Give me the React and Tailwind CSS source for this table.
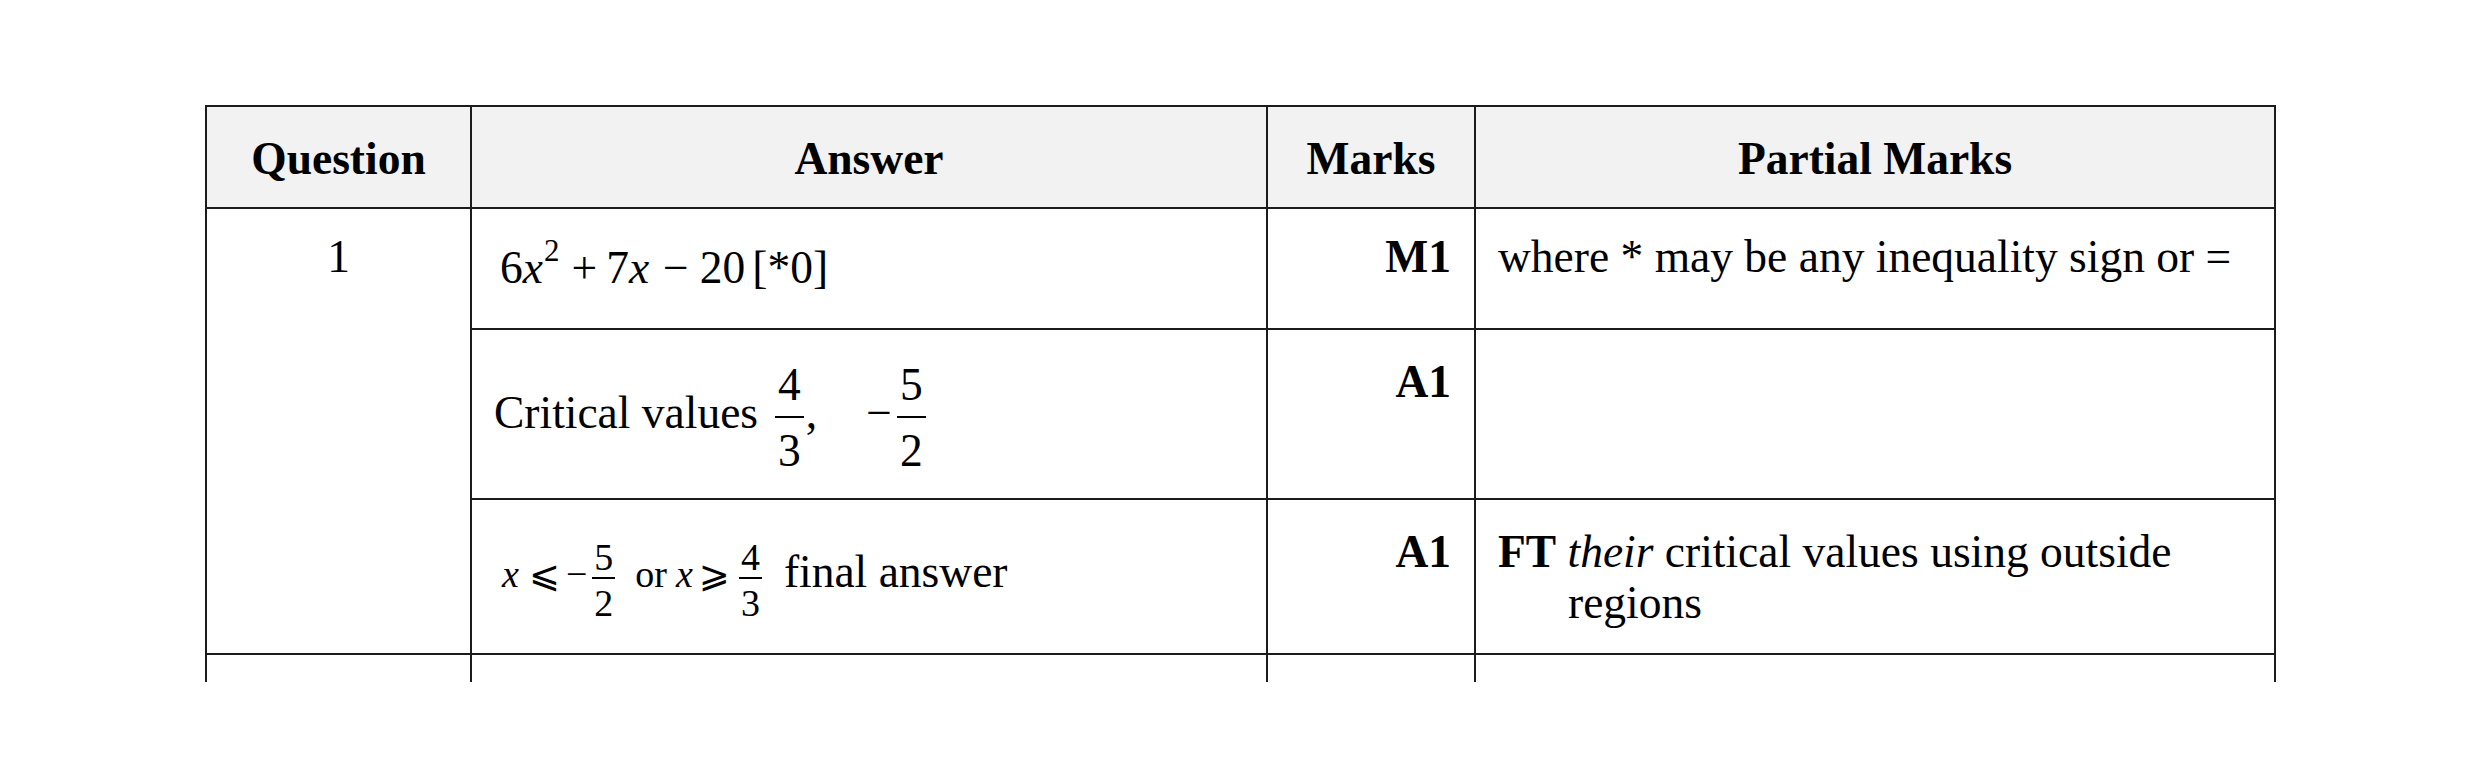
const B = "border-2 border-[#1c1c1c] align-top";
const LAST = "border-x-2 border-t-2 border-b-0 border-[#1c1c1c] align-top";

function FracBig({ n, d, cls }) {
  return (
    <span className={`inline-flex flex-col items-center align-[28px] ${cls}`}>
      <span className="px-[3px] pb-[15px] leading-[32px]">{n}</span>
      <span className="h-[2px] w-full bg-black"></span>
      <span className="px-[3px] pt-[17px] leading-[32px]">{d}</span>
    </span>
  );
}

function FracSmall({ n, d, cls }) {
  return (
    <span className={`inline-flex flex-col items-center align-[17px] text-[38px] ${cls}`}>
      <span className="px-[2px] pb-[6px] leading-[28px]">{n}</span>
      <span className="h-[2px] w-full bg-black"></span>
      <span className="px-[2px] pt-[10px] leading-[28px]">{d}</span>
    </span>
  );
}

export default function App() {
  return (
    <div className="min-h-[757px] w-full bg-white pl-[205px] pt-[105px] font-['Liberation_Serif','Times_New_Roman',serif] text-[45.5px] leading-[51px] text-black">
      <table className="w-[2071px] table-fixed border-collapse">
        <colgroup>
          <col className="w-[265px]" />
          <col className="w-[796px]" />
          <col className="w-[208px]" />
          <col className="w-[800px]" />
        </colgroup>
        <thead>
          <tr className="h-[102px] bg-[#f2f2f2]">
            <th className={`${B} pt-[26px] text-center font-bold`}>Question</th>
            <th className={`${B} pt-[26px] text-center font-bold`}>Answer</th>
            <th className={`${B} pt-[26px] text-center font-bold`}>Marks</th>
            <th className={`${B} pt-[26px] text-center font-bold`}>Partial Marks</th>
          </tr>
        </thead>
        <tbody>
          <tr className="h-[121px]">
            <td rowSpan={3} className={`${B} pt-[22px] text-center`}>1</td>
            <td className={`${B} pt-[33px] pl-[28px] whitespace-nowrap`}>
              <span>6</span>
              <span className="italic">x</span>
              <span className="ml-[1px] align-[22px] text-[31px] leading-[0]">2</span>
              <span className="ml-[12px] mr-[9px]">+</span>
              <span>7</span>
              <span className="italic">x</span>
              <span className="ml-[14px] mr-[11px]">−</span>
              <span>20</span>
              <span className="ml-[7px]">[*0]</span>
            </td>
            <td className={`${B} pt-[22px] pr-[23px] text-right font-bold`}>M1</td>
            <td className={`${B} pt-[22px] pl-[22px] whitespace-nowrap`}>
              where * may be any inequality sign or =
            </td>
          </tr>
          <tr className="h-[170px]">
            <td className={`${B} pt-[39px] pl-[22px] whitespace-nowrap`}>
              <span>Critical values</span>
              <FracBig n="4" d="3" cls="ml-[17px]" />
              <span className="ml-[2px]">,</span>
              <span className="ml-[49px]">−</span>
              <FracBig n="5" d="2" cls="ml-[5px]" />
            </td>
            <td className={`${B} pt-[26px] pr-[23px] text-right font-bold`}>A1</td>
            <td className={B}></td>
          </tr>
          <tr className="h-[155px]">
            <td className={`${B} pt-[43px] pl-[30px] whitespace-nowrap`}>
              <span className="text-[38px] italic">x</span>
              <span className="ml-[10px] font-['DejaVu_Sans',sans-serif] text-[37px]">⩽</span>
              <span className="ml-[6px] text-[38px]">−</span>
              <FracSmall n="5" d="2" cls="ml-[5px]" />
              <span className="ml-[20px] text-[38px]">or</span>
              <span className="ml-[9px] text-[38px] italic">x</span>
              <span className="ml-[6px] font-['DejaVu_Sans',sans-serif] text-[37px]">⩾</span>
              <FracSmall n="4" d="3" cls="ml-[9px]" />
              <span className="ml-[22px]">final answer</span>
            </td>
            <td className={`${B} pt-[26px] pr-[23px] text-right font-bold`}>A1</td>
            <td className={`${B} pt-[26px] pl-[92px] indent-[-70px]`}>
              <span className="font-bold">FT</span> <span className="italic">their</span> critical values using outside
              <br />
              regions
            </td>
          </tr>
          <tr className="h-[28px]">
            <td className={LAST}></td>
            <td className={LAST}></td>
            <td className={LAST}></td>
            <td className={LAST}></td>
          </tr>
        </tbody>
      </table>
    </div>
  );
}
